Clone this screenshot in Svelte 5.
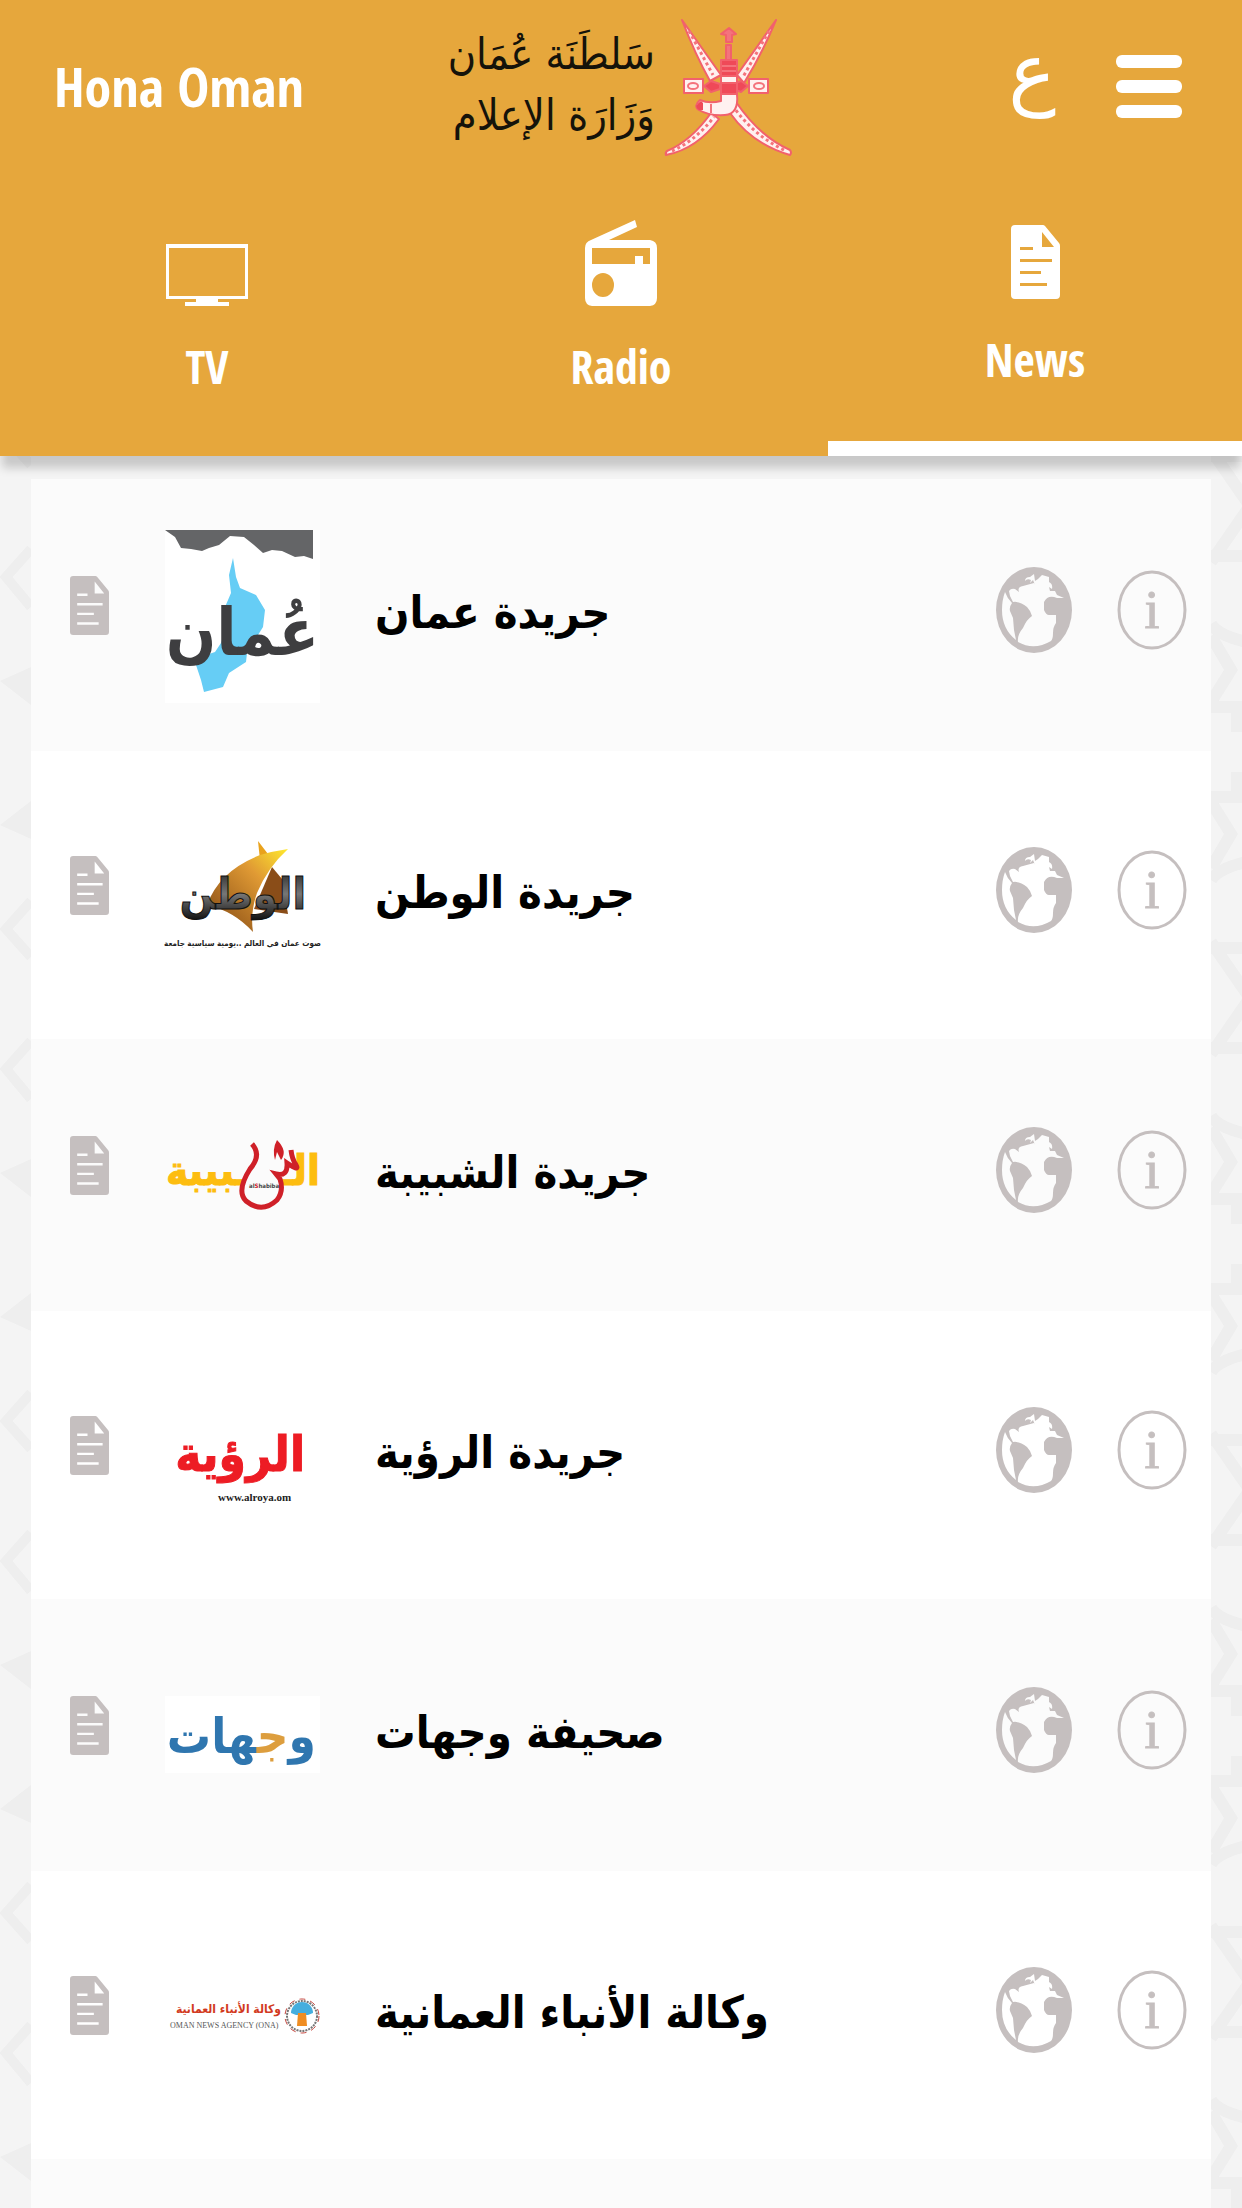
<script>
  const tabs = [
    { id: 'tv', label: 'TV' },
    { id: 'radio', label: 'Radio' },
    { id: 'news', label: 'News' }
  ];
  let active = $state('news');

  const papers = [
    { id: 'oman', name: 'جريدة عمان' },
    { id: 'watan', name: 'جريدة الوطن' },
    { id: 'shabiba', name: 'جريدة الشبيبة' },
    { id: 'roya', name: 'جريدة الرؤية' },
    { id: 'wejhat', name: 'صحيفة وجهات' },
    { id: 'ona', name: 'وكالة الأنباء العمانية' }
  ];
</script>

{#snippet doc()}
  <svg class="doc" viewBox="0 0 49 74" preserveAspectRatio="none" aria-hidden="true">
    <path fill="currentColor" fill-rule="evenodd" d="M4 0H32Q33 0 34 1L48 18Q49 19 49 21V70Q49 74 45 74H4Q0 74 0 70V4Q0 0 4 0ZM31 7V22H43ZM9 22V25H22V22ZM9 34V37H41V34ZM9 46V49H30V46ZM9 58V61H36V58Z" />
  </svg>
{/snippet}

<div class="page">
  <header>
    <div class="bar">
      <h1>Hona Oman</h1>
      <svg class="ministry" viewBox="-6 0 354 150" role="img" aria-label="Ministry of Information">
        <g font-size="43" fill="#15130a" direction="rtl">
          <text x="208" y="58">سَلطَنَة عُمَان</text>
          <text x="208" y="119">وَزَارَة الإعلام</text>
        </g>
        <g fill="#fff1f0" stroke="#f2616c" stroke-width="2" stroke-linejoin="round">
          <path d="M235 9L274 64L263 70Q248 43 235 9Z" />
          <path d="M329 9L290 64L297 72Q315 43 329 9Z" />
          <path d="M264 102L272 108Q250 138 219 144Q218 142 220 140Q244 130 264 102Z" />
          <path d="M289 91L283 102Q305 133 343 144Q345 142 343 139Q313 126 289 91Z" />
          <path d="M237 68H256V82H237ZM302 68H321V82H302Z" />
          <path d="M257 75L264 70L273 73V78L264 81ZM301 75L294 70L286 73V78L294 81Z" fill="#ef4958" />
          <path d="M274 49H290V83H274Z" fill="#ef4958" />
          <path d="M274 65H290V72H274Z" />
          <path d="M279 34H284V49H279ZM274 23L282 17L289 23L285 24V31H279V24Z" fill="#f4737c" />
          <path d="M274 83H290Q292 103 278 104Q262 105 252 99Q246 95 253 89Q262 93 274 90Z" />
        </g>
        <g fill="none" stroke="#f4737c" stroke-dasharray="3 3" stroke-width="3">
          <path d="M242 20L266 64M322 20L296 66M225 140Q248 130 267 106M337 139Q308 125 288 98" />
        </g>
        <g fill="none" stroke="#f4737c" stroke-width="2">
          <ellipse cx="246" cy="75" rx="5" ry="3" /><ellipse cx="312" cy="75" rx="5" ry="3" />
          <path d="M264 93V102M275 55H289M275 60H289" />
        </g>
        <path d="M254 90Q246 95 252 99L256 99V92Z" fill="#ef4958" />
      </svg>
      <div class="tools">
        <button class="lang" aria-label="العربية" lang="ar">ع</button>
        <button class="menu" aria-label="Menu"><span></span><span></span><span></span></button>
      </div>
    </div>
    <nav>
      {#each tabs as tab}
        <button class="tab" class:active={active === tab.id} onclick={() => (active = tab.id)}>
          {#if tab.id === 'tv'}
            <svg class="tv" viewBox="0 0 82 62" aria-hidden="true">
              <path fill="currentColor" fill-rule="evenodd" d="M0 0H82V55H52V58H63V62H19V58H30V55H0ZM3 4V52H79V4Z" />
            </svg>
          {:else if tab.id === 'radio'}
            <svg class="radio" viewBox="0 0 72 86" aria-hidden="true">
              <path fill="currentColor" fill-rule="evenodd" d="M50 0L52 7L24 20H65Q72 21 72 28V78Q72 85 65 86H7Q0 85 0 78V28Q0 22 6 20ZM7 28V44H50V36H58V44H65V28ZM18 53A11 12 0 1 0 18 77A11 12 0 1 0 18 53Z" />
            </svg>
          {:else}
            {@render doc()}
          {/if}
          <span>{tab.label}</span>
        </button>
      {/each}
    </nav>
  </header>

  <main>
    <svg class="pattern" aria-hidden="true">
      <defs>
        <pattern id="left" width="31" height="492" y="51" patternUnits="userSpaceOnUse">
          <g fill="none" stroke="#eeeeee" stroke-width="10">
            <path d="M31 42L6 70L31 100M31 394L6 422L31 450" />
          </g>
          <path fill="#eeeeee" d="M0 174L31 160V198ZM0 318L31 294V332Z" />
        </pattern>
        <pattern id="right" width="31" height="492" y="50" patternUnits="userSpaceOnUse">
          <g fill="none" stroke="#eeeeee" stroke-width="12">
            <path d="M0 50H31M0 56L36 4M0 118Q8 130 36 136M0 130L20 164L0 196M0 201H36M26 201V226M0 291H36M26 291V266M0 296L20 328L0 362M36 356Q8 362 0 374M0 442H31M0 436L36 488" />
          </g>
        </pattern>
      </defs>
      <rect width="31" height="100%" fill="url(#left)" />
      <svg x="100%" overflow="visible"><g transform="translate(-31)"><rect width="31" height="3000" fill="url(#right)" /></g></svg>
    </svg>

    <ul>
      {#each papers as paper}
        <li>
          <button class="read" aria-label="Read">{@render doc()}</button>
          <svg class="logo" viewBox="0 0 156 176" aria-hidden="true">
            {#if paper.id === 'oman'}
              <path fill="#fff" d="M1 3H156V176H1Z" />
              <path fill="#646567" d="M1 3H149V32L140 29L131 30L118 24L108 23L99 26L90 18L80 10L66 9L55 18L45 21L38 24L27 22L17 21L11 10Z" />
              <path fill="#66cdf5" d="M69 31L65 48L67 66L61 80L63 100L57 116L51 125L30 132L37 153L40 165L59 160L65 146L82 135L83 126L90 116L94 108L99 100L101 83L92 68L76 61L72 50Z" />
              <text x="155" y="128" direction="rtl" font-size="66" font-weight="bold" fill="#3e3e40">عُمان</text>
            {:else if paper.id === 'watan'}
              <defs>
                <linearGradient id="sail" x1="1" y1="0" x2="0" y2="1">
                  <stop offset="0" stop-color="#ffe92e" /><stop offset="0.35" stop-color="#e09a34" /><stop offset="1" stop-color="#7d4311" />
                </linearGradient>
                <linearGradient id="steel" x1="0" y1="0" x2="0" y2="1">
                  <stop offset="0" stop-color="#222" /><stop offset="0.5" stop-color="#777" /><stop offset="1" stop-color="#111" />
                </linearGradient>
              </defs>
              <path fill="#e9a21c" d="M94 34L104 47L96 53Z" />
              <path fill="#8a4d18" d="M108 60L118 72L124 107L90 102Z" />
              <path fill="url(#sail)" d="M124 42Q104 60 93 86Q86 106 89 125Q70 104 43 98Q55 64 96 48Q110 44 124 42Z" />
              <text x="142" y="102" direction="rtl" font-size="44" font-weight="bold" fill="url(#steel)" stroke="#111">الوطن</text>
              <text x="157" y="139" direction="rtl" font-size="8" font-weight="bold" fill="#222">صوت عمان في العالم ..يومية سياسية جامعة</text>
            {:else if paper.id === 'shabiba'}
              <g direction="rtl" font-size="42" font-weight="bold" fill="#fdbd10" stroke="#fdbd10">
                <text x="156" y="98">الـ</text>
                <text x="84" y="98">ـبيبة</text>
              </g>
              <path fill="#fbfbfb" stroke="#cf2028" stroke-width="5" d="M88 57Q98 68 86 82Q72 104 82 114Q98 127 113 113Q120 104 116 92L112 87Q124 90 123 76Q136 85 132 78Q128 72 127 63" />
              <path fill="#cf2028" d="M113 53Q124 64 117 73L113 65L111 73Q108 62 113 53Z" />
              <text x="85" y="101" font-size="6" font-weight="bold" fill="#444">al<tspan fill="#cf2028">S</tspan>habiba</text>
            {:else if paper.id === 'roya'}
              <text x="141" y="104" direction="rtl" font-size="49" font-weight="bold" fill="#ed1c24" stroke="#ed1c24">الرؤية</text>
              <text class="serif" x="54" y="134" font-size="11" font-weight="bold" fill="#222">www.alroya.om</text>
            {:else if paper.id === 'wejhat'}
              <path fill="#fff" d="M1 49H156V126H1Z" />
              <text x="152" y="106" direction="rtl" font-size="49" font-weight="bold" fill="#2f76af">و<tspan fill="#dd9e3e">ج</tspan>هات</text>
            {:else}
              <text x="117" y="86" direction="rtl" font-size="12" font-weight="bold" fill="#d23a1e">وكالة الأنباء العمانية</text>
              <text class="serif" x="6" y="101" font-size="8" fill="#555">OMAN NEWS AGENCY (ONA)</text>
              <circle cx="138" cy="89" r="15" fill="#fff" stroke="#777" stroke-width="2" stroke-dasharray="2 1" />
              <circle cx="138" cy="89" r="17" fill="none" stroke="#c4473f" stroke-width="1" stroke-dasharray="6 5" />
              <path fill="#45aede" d="M127 86A11 11 0 0 1 149 86L144 88H132Z" />
              <path fill="#ef8d22" d="M134 86H142L143 99H133Z" />
            {/if}
          </svg>
          <span class="name" dir="rtl" lang="ar">{paper.name}</span>
          <a class="web" href="#{paper.id}" aria-label="Website">
            <svg viewBox="0 0 76 86" aria-hidden="true">
              <path fill="currentColor" fill-rule="evenodd" d="M38 0A38 43 0 1 1 38 86A38 43 0 1 1 38 0ZM13 24Q15 21 19 22L23 25Q21 20 27 19L38 16L39 18L37 13L34 16L35 13Q31 11 29 14Q29 10 34 10L38 7L39 14L42 12L46 8L53 10V15Q57 17 56 22L53 20L54 24H59L61 28L68 31L61 31Q52 27 48 35V43Q50 48 53 48H60V56Q57 60 57 66Q57 72 55 74Q38 84 22 75Q21 68 27 61Q31 52 36 49L34 44L31 40Q24 34 17 35L14 29ZM9 25Q11 31 16 36Q13 40 14 44L17 51L18 63L20 73Q6 62 6 43Q6 33 9 25Z" />
            </svg>
          </a>
          <button class="info" aria-label="Info">
            <svg viewBox="0 0 70 80" aria-hidden="true">
              <ellipse cx="35" cy="40" rx="33" ry="38" fill="none" stroke="currentColor" stroke-width="3" />
              <text class="serif" x="35" y="58" text-anchor="middle" font-size="54" fill="currentColor" stroke="currentColor">i</text>
            </svg>
          </button>
        </li>
      {/each}
    </ul>
  </main>
</div>

<style>
  :global(body) { background: #f4f4f4; }
  .page {
    min-height: 100vh;
    display: flex;
    flex-direction: column;
    font-family: 'DejaVu Sans Condensed', 'DejaVu Sans', sans-serif;
  }
  button { border: 0; padding: 0; background: none; color: inherit; cursor: pointer; }
  svg { display: block; }
  text { font-family: 'DejaVu Sans Condensed', 'DejaVu Sans', sans-serif; }
  .serif { font-family: 'Liberation Serif', serif; }

  header {
    position: relative;
    background: #e6a73c;
    color: #fff;
    box-shadow: 0 14px 9px -2px rgba(0, 0, 0, 0.18);
  }
  .bar {
    height: 172px;
    padding: 0 60px 0 54px;
    display: grid;
    grid-template-columns: 1fr 354px 1fr;
    align-items: center;
  }
  h1 {
    margin: 0;
    font: bold 54px/64px 'Open Sans Condensed', 'Liberation Sans Narrow', sans-serif;
    white-space: nowrap;
  }
  .ministry { width: 354px; height: 150px; overflow: visible; }
  .tools { display: flex; justify-content: flex-end; align-items: center; gap: 60px; }
  .lang { padding-bottom: 28px; font: 80px/80px 'DejaVu Sans', sans-serif; }
  .menu { display: flex; flex-direction: column; gap: 12px; width: 66px; }
  .menu span { height: 13px; border-radius: 6px; background: #fff; }

  nav { display: grid; grid-template-columns: repeat(3, 1fr); height: 284px; }
  .tab {
    display: flex;
    flex-direction: column;
    align-items: center;
    justify-content: flex-end;
    gap: 32px;
    padding-bottom: 62px;
    font: bold 46px/56px 'Open Sans Condensed', 'Liberation Sans Narrow', sans-serif;
  }
  .active { border-bottom: 15px solid #fff; padding-bottom: 54px; }
  .tv { width: 82px; height: 62px; }
  .radio { width: 72px; height: 86px; }
  .tab .doc { width: 49px; height: 74px; }

  main { position: relative; flex: 1; display: flex; padding: 23px 31px 0; }
  .pattern { position: absolute; inset: 0; width: 100%; height: 100%; z-index: -1; }
  ul { position: relative; list-style: none; margin: 0; padding: 0; flex: 1; background: #fbfbfb; }
  li {
    height: 272px;
    padding: 0 24px 0 39px;
    display: flex;
    align-items: center;
    color: #c5bfbf;
  }
  li:nth-child(even) { height: 288px; background: #fff; }
  .read { padding-bottom: 20px; }
  .read .doc { width: 39px; height: 59px; }
  .logo { width: 156px; height: 176px; margin: 0 55px; overflow: visible; }
  .name { padding-bottom: 4px; color: #000; font-size: 45px; line-height: 64px; font-weight: bold; white-space: nowrap; }
  .web { margin-left: auto; padding-bottom: 10px; color: inherit; }
  .web svg { width: 76px; height: 86px; }
  .info { margin-left: 45px; padding-bottom: 10px; }
  .info svg { width: 70px; height: 80px; }
</style>
